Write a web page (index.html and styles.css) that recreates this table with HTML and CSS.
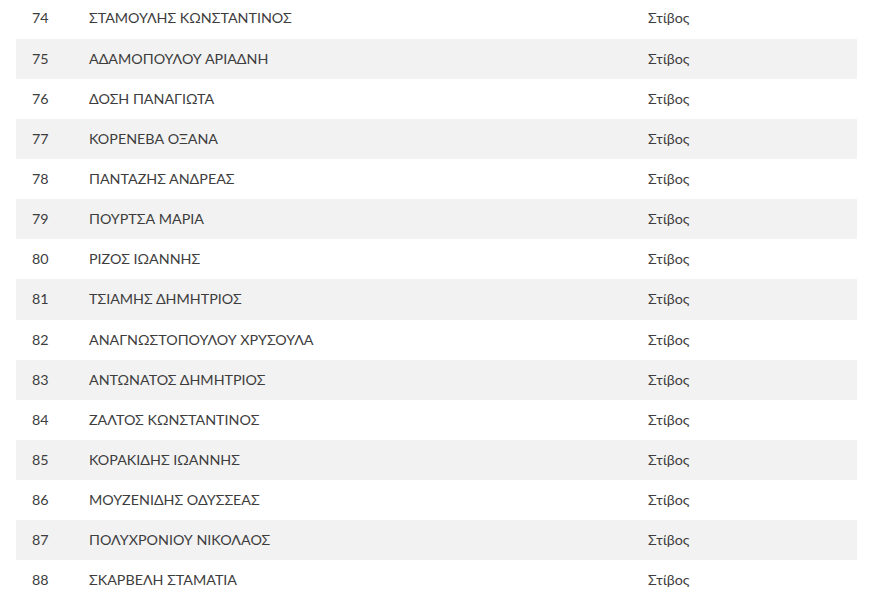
FILE: index.html
```html
<!DOCTYPE html>
<html lang="el">
<head>
<meta charset="utf-8">
<link rel="stylesheet" href="styles.css">
</head>
<body>
<div class="wrap">
<table class="list">
<tbody>
<tr><td class="num">74</td><td class="name">ΣΤΑΜΟΥΛΗΣ ΚΩΝΣΤΑΝΤΙΝΟΣ</td><td class="sport">Στίβος</td></tr>
<tr><td class="num">75</td><td class="name">ΑΔΑΜΟΠΟΥΛΟΥ ΑΡΙΑΔΝΗ</td><td class="sport">Στίβος</td></tr>
<tr><td class="num">76</td><td class="name">ΔΟΣΗ ΠΑΝΑΓΙΩΤΑ</td><td class="sport">Στίβος</td></tr>
<tr><td class="num">77</td><td class="name">ΚΟΡΕΝΕΒΑ ΟΞΑΝΑ</td><td class="sport">Στίβος</td></tr>
<tr><td class="num">78</td><td class="name">ΠΑΝΤΑΖΗΣ ΑΝΔΡΕΑΣ</td><td class="sport">Στίβος</td></tr>
<tr><td class="num">79</td><td class="name">ΠΟΥΡΤΣΑ ΜΑΡΙΑ</td><td class="sport">Στίβος</td></tr>
<tr><td class="num">80</td><td class="name">ΡΙΖΟΣ ΙΩΑΝΝΗΣ</td><td class="sport">Στίβος</td></tr>
<tr><td class="num">81</td><td class="name">ΤΣΙΑΜΗΣ ΔΗΜΗΤΡΙΟΣ</td><td class="sport">Στίβος</td></tr>
<tr><td class="num">82</td><td class="name">ΑΝΑΓΝΩΣΤΟΠΟΥΛΟΥ ΧΡΥΣΟΥΛΑ</td><td class="sport">Στίβος</td></tr>
<tr><td class="num">83</td><td class="name">ΑΝΤΩΝΑΤΟΣ ΔΗΜΗΤΡΙΟΣ</td><td class="sport">Στίβος</td></tr>
<tr><td class="num">84</td><td class="name">ΖΑΛΤΟΣ ΚΩΝΣΤΑΝΤΙΝΟΣ</td><td class="sport">Στίβος</td></tr>
<tr><td class="num">85</td><td class="name">ΚΟΡΑΚΙΔΗΣ ΙΩΑΝΝΗΣ</td><td class="sport">Στίβος</td></tr>
<tr><td class="num">86</td><td class="name">ΜΟΥΖΕΝΙΔΗΣ ΟΔΥΣΣΕΑΣ</td><td class="sport">Στίβος</td></tr>
<tr><td class="num">87</td><td class="name">ΠΟΛΥΧΡΟΝΙΟΥ ΝΙΚΟΛΑΟΣ</td><td class="sport">Στίβος</td></tr>
<tr><td class="num">88</td><td class="name">ΣΚΑΡΒΕΛΗ ΣΤΑΜΑΤΙΑ</td><td class="sport">Στίβος</td></tr>
</tbody>
</table>
</div>
</body>
</html>
```
FILE: styles.css
```css
html, body {
  margin: 0;
  padding: 0;
  background: #fff;
}
body {
  font-family: Lato, "Open Sans", "DejaVu Sans", sans-serif;
  font-size: 14.3px;
  color: #3d3d3d;
  overflow: hidden;
}
.wrap {
  padding: 0 15px 0 16px;
  margin-top: -1.6px;
}
.list {
  width: 100%;
  border-collapse: collapse;
  table-layout: fixed;
}
.list td {
  padding: 12px 0 12px 16px;
  line-height: 16.14px;
  height: 16.14px;
  white-space: nowrap;
}
.list tr:nth-child(even) td {
  background: #f2f2f2;
}
.num { width: 41px; }
.name { width: 543px; }
```
